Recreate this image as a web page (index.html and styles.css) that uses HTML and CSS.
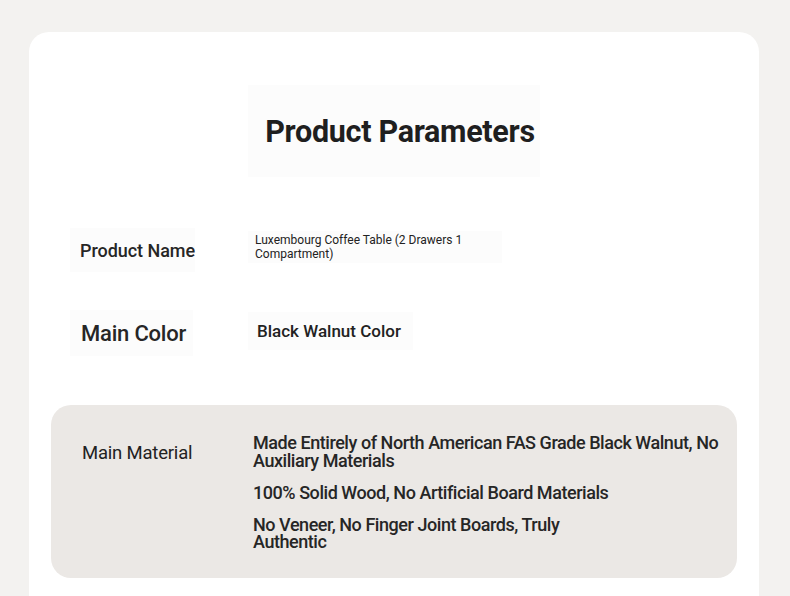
FILE: index.html
```html
<!DOCTYPE html>
<html>
<head>
<meta charset="utf-8">
<link rel="stylesheet" href="styles.css">
</head>
<body>
<div class="card">
  <div class="title-box"><h1 class="title">Product Parameters</h1></div>
  <div class="params">
    <div class="row row-name">
      <div class="label label-name">Product Name</div>
      <div class="value value-name">Luxembourg Coffee Table (2 Drawers 1 Compartment)</div>
    </div>
    <div class="row row-color">
      <div class="label label-color">Main Color</div>
      <div class="value value-color">Black Walnut Color</div>
    </div>
    <div class="row row-material">
      <div class="label label-material">Main Material</div>
      <div class="values">
        <div class="value value-mat v1">Made Entirely of North American FAS Grade Black Walnut, No Auxiliary Materials</div>
        <div class="value value-mat v2">100% Solid Wood, No Artificial Board Materials</div>
        <div class="value value-mat v3">No Veneer, No Finger Joint Boards, Truly Authentic</div>
      </div>
    </div>
  </div>
</div>
</body>
</html>
```
FILE: styles.css
```css
* { box-sizing: border-box; }
html, body { margin: 0; padding: 0; }
body {
  background: #f3f2f0;
  font-family: Roboto, "Liberation Sans", sans-serif;
  color: #222;
  padding-top: 32px;
  height: 596px;
  overflow: hidden;
}
.card {
  margin: 0 31px 0 29px;
  background: #fff;
  border-radius: 20px;
  min-height: 700px;
  padding: 53px 22px 0;
}
.title-box {
  width: 292px;
  height: 92px;
  margin: 0 auto;
  background: #fcfcfc;
  display: flex;
  align-items: center;
  justify-content: center;
  padding-left: 12px;
}
.title {
  margin: 0;
  font-size: 30.5px;
  font-weight: 700;
  color: #1f1f1f;
  letter-spacing: -0.3px;
  white-space: nowrap;
}
.params {
  display: flex;
  flex-direction: column;
}
.row {
  display: flex;
  align-items: flex-start;
}
.label {
  background: #fcfcfc;
  display: flex;
  align-items: center;
  white-space: nowrap;
}
.row-name {
  margin-top: 51px;
  padding-left: 19px;
}
.label-name {
  width: 125px;
  height: 44px;
  padding-left: 10px;
  font-size: 18px;
  font-weight: 500;
  letter-spacing: -0.05px;
  color: #262626;
}
.value-name {
  margin-left: 53px;
  margin-top: 3px;
  width: 254px;
  height: 32px;
  background: #fcfcfc;
  font-size: 12px;
  line-height: 14px;
  padding: 2px 30px 0 7px;
  font-weight: 400;
}
.row-color {
  margin-top: 38px;
  padding-left: 19px;
}
.label-color {
  width: 123px;
  height: 46px;
  padding-left: 11px;
  font-size: 22px;
  font-weight: 500;
  letter-spacing: -0.2px;
  color: #262626;
}
.value-color {
  margin-left: 55px;
  margin-top: 2px;
  width: 165px;
  height: 38px;
  background: #fcfcfc;
  font-size: 17px;
  font-weight: 500;
  padding-left: 9px;
  display: flex;
  align-items: center;
}
.row-material {
  margin-top: 49px;
  background: #ebe8e5;
  border-radius: 20px;
  height: 173px;
  padding: 28px 0 0 21px;
}
.label-material {
  background: transparent;
  width: 181px;
  height: 40px;
  padding-left: 10px;
  font-size: 18.5px;
  font-weight: 400;
  letter-spacing: -0.2px;
}
.values {
  display: flex;
  flex-direction: column;
  gap: 14.5px;
  padding-top: 1px;
}
.value-mat {
  font-size: 18px;
  line-height: 17.5px;
  letter-spacing: -0.45px;
  font-weight: 500;
  color: #262626;
}
.v1 { width: 480px; }
.v3 { width: 330px; }
```
